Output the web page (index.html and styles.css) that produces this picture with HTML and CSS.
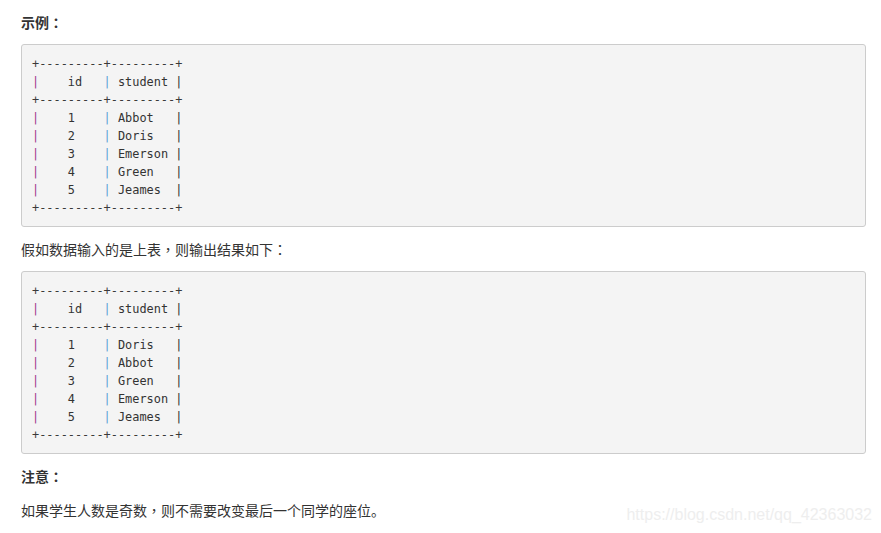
FILE: index.html
```html
<!DOCTYPE html>
<html lang="zh-CN">
<head>
<meta charset="utf-8">
<link rel="stylesheet" href="styles.css">
</head>
<body>
<div class="content">
<p class="title">示例<span class="punct" lang="zh-TW">：</span></p>
<pre class="code"><span class="op">+---------+---------+</span>
<span class="pa">|</span>    id   <span class="pb">|</span> student <span class="pc">|</span>
<span class="op">+---------+---------+</span>
<span class="pa">|</span>    1    <span class="pb">|</span> Abbot   <span class="pc">|</span>
<span class="pa">|</span>    2    <span class="pb">|</span> Doris   <span class="pc">|</span>
<span class="pa">|</span>    3    <span class="pb">|</span> Emerson <span class="pc">|</span>
<span class="pa">|</span>    4    <span class="pb">|</span> Green   <span class="pc">|</span>
<span class="pa">|</span>    5    <span class="pb">|</span> Jeames  <span class="pc">|</span>
<span class="op">+---------+---------+</span></pre>
<p class="text">假如数据输入的是上表<span class="punct" lang="zh-TW">，</span>则输出结果如下<span class="punct" lang="zh-TW">：</span></p>
<pre class="code"><span class="op">+---------+---------+</span>
<span class="pa">|</span>    id   <span class="pb">|</span> student <span class="pc">|</span>
<span class="op">+---------+---------+</span>
<span class="pa">|</span>    1    <span class="pb">|</span> Doris   <span class="pc">|</span>
<span class="pa">|</span>    2    <span class="pb">|</span> Abbot   <span class="pc">|</span>
<span class="pa">|</span>    3    <span class="pb">|</span> Green   <span class="pc">|</span>
<span class="pa">|</span>    4    <span class="pb">|</span> Emerson <span class="pc">|</span>
<span class="pa">|</span>    5    <span class="pb">|</span> Jeames  <span class="pc">|</span>
<span class="op">+---------+---------+</span></pre>
<p class="title note">注意<span class="punct" lang="zh-TW">：</span></p>
<p class="text last">如果学生人数是奇数<span class="punct" lang="zh-TW">，</span>则不需要改变最后一个同学的座位。</p>
</div>
<div class="watermark">https://blog.csdn.net/qq_42363032</div>
</body>
</html>
```
FILE: styles.css
```css
html, body {
  margin: 0;
  padding: 0;
  background: #ffffff;
}
body {
  font-family: "Noto Sans CJK SC", "Noto Sans", sans-serif;
  color: #333333;
  font-size: 14px;
  width: 881px;
  height: 533px;
  overflow: hidden;
  position: relative;
}
.content {
  padding: 12px 15px 0 21px;
}
.title {
  margin: 0;
  font-weight: bold;
  line-height: 20px;
  font-size: 14px;
}
.text {
  margin: 12px 0;
  line-height: 20px;
  font-size: 14px;
}
.punct {
  font-family: "Noto Sans CJK TC", "Noto Sans CJK SC", sans-serif;
}
.note {
  margin-top: 12px;
}
.last {
  margin-top: 14px;
}
.code {
  margin: 12px 0 0 0;
  padding: 10px 10px 9px 10px;
  background: #f4f4f4;
  border: 1px solid #cccccc;
  border-radius: 3px;
  font-family: "DejaVu Sans Mono", monospace;
  font-size: 11.9px;
  line-height: 18px;
  color: #333333;
}
.op { color: #3a3a3a; }
.pa { color: #9c3a8e; }
.pb { color: #5a9fd4; }
.pc { color: #333333; }
.watermark {
  position: absolute;
  right: 9px;
  bottom: 9px;
  font-family: "Liberation Sans", Arial, sans-serif;
  font-size: 16px;
  line-height: 18px;
  color: #eeeeee;
}
```
